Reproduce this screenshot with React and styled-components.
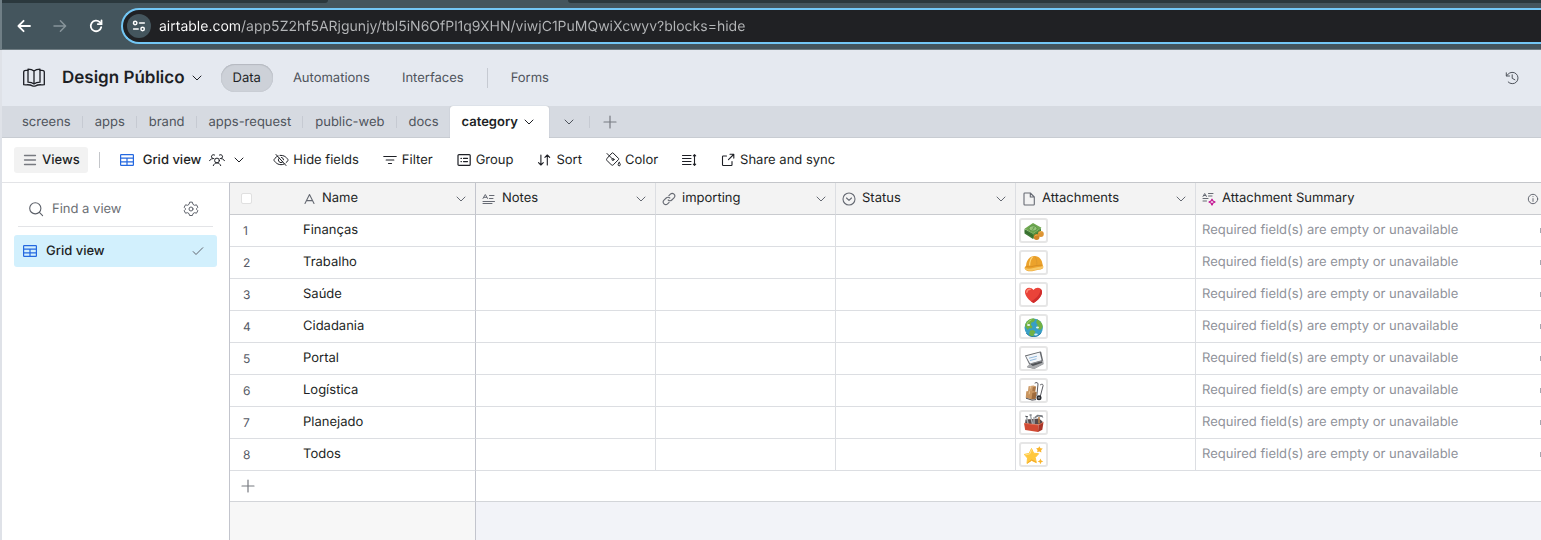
import React from "react";
import styled, { createGlobalStyle, css } from "styled-components";

const GlobalStyle = createGlobalStyle`
  * { box-sizing: border-box; }
  body {
    margin: 0;
    font-family: Inter, "Liberation Sans", sans-serif;
    font-size: 13px;
    line-height: 19px;
    color: #1d1f25;
    background: #fff;
    -webkit-font-smoothing: antialiased;
    text-rendering: geometricPrecision;
  }
  button, input { font: inherit; color: inherit; text-rendering: inherit; }
`;

/* ---------- icons ---------- */

const Svg = styled.svg`
  display: block;
  flex: none;
  fill: none;
  stroke: currentColor;
  stroke-width: ${(p) => p.$weight || 1};
  stroke-linecap: round;
  stroke-linejoin: round;
`;

const Icon = ({ size = 16, weight, children, ...rest }) => (
  <Svg width={size} height={size} viewBox={`0 0 ${size} ${size}`} $weight={weight} aria-hidden="true" {...rest}>
    {children}
  </Svg>
);

const BackIcon = () => (
  <Icon weight={1.8}><path d="M14 8H2.6M7.6 2.8 2.4 8l5.200 5.200" /></Icon>
);
const ForwardIcon = () => (
  <Icon weight={1.5}><path d="M2 8h11.400M8.400 2.800 13.600 8l-5.200 5.200" /></Icon>
);
const ReloadIcon = () => (
  <Icon weight={1.8}>
    <path d="M13.2 9.200A5.300 5.300 0 1 1 11.800 4.200L13.200 5.600" />
    <path d="M13.500 2.400v3.700H9.800" strokeLinejoin="miter" />
  </Icon>
);
const TuneIcon = () => (
  <Icon size={14} weight={1.5}>
    <circle cx="3.200" cy="4" r="1.700" /><path d="M7.500 4h4.800M1.600 10h4.600" /><circle cx="10.600" cy="10" r="1.700" />
  </Icon>
);
const BookIcon = () => (
  <Icon size={24} weight={1.300}>
    <path d="M12 5c-1.600-1.400-3.500-1.800-6-1.800v13c2.600 0 4.500.5 6 1.700 1.500-1.200 3.400-1.700 6-1.700v-13c-2.500 0-4.400.4-6 1.800Zm0 0v12.500" />
    <path d="M6 4.300H4c-1.300 0-2.300.5-2.300 1.800v12.600c2 .3 4.600-.2 6.600.3 1.300.3 2.300 1.200 3.700 1.200s2.400-.9 3.700-1.200c2-.5 4.600 0 6.600-.3V6.100c0-1.300-1-1.800-2.300-1.800h-2" />
  </Icon>
);
const ChevronIcon = () => (
  <Icon size={12} weight={1}><path d="m2 4 4 4 4-4" /></Icon>
);
const HistoryIcon = () => (
  <Icon>
    <path d="M4.200 12A5.700 5.700 0 1 0 4 4.300L2.300 6M2.300 2.800V6h3.200" /><path d="M8.200 4.800v3.500l2.700 1.500" />
  </Icon>
);
const PlusIcon = () => (
  <Icon weight={1.200}><path d="M8 2v12M2 8h12" /></Icon>
);
const MenuIcon = () => (
  <Icon weight={1.300}><path d="M2.500 3.500h11M2.500 8h11M2.500 12.500h11" /></Icon>
);
const GridIcon = () => (
  <Icon weight={1.200}>
    <rect x="1.600" y="2.600" width="12.800" height="10.800" rx=".6" /><path d="M1.600 6.200h12.800M1.600 9.800h12.800M8 6.200v7.200" />
  </Icon>
);
const PeopleIcon = () => (
  <Icon>
    <circle cx="8" cy="8.500" r="2.400" />
    <path d="M4.300 13.600c.6-1.700 2-2.700 3.700-2.700s3.100 1 3.700 2.700" />
    <path d="M4.800 6.600A2 2 0 1 1 5.600 3M3.500 6.700C2.200 6.700 1.200 7.400.6 8.700M11.200 6.600A2 2 0 1 0 10.400 3M12.500 6.700c1.300 0 2.300.7 2.900 2" />
  </Icon>
);
const HideIcon = () => (
  <Icon>
    <path d="M5 3.900C2.300 5 .8 8 .8 8s2.300 4.700 7.200 4.700c1.200 0 2.200-.2 3.100-.7M7 3.400h1c4.900 0 7.200 4.600 7.200 4.600s-.7 1.500-2.200 2.800M3 2.500l10 11" />
    <path d="M6.200 6.100a2.600 2.600 0 0 0 3.600 3.800M8.500 5.400A2.600 2.600 0 0 1 10.600 7.800" />
  </Icon>
);
const FilterIcon = () => (
  <Icon weight={1.200}><path d="M1.800 4.500h12.400M4.200 8h7.600M6.500 11.500h3" /></Icon>
);
const GroupIcon = () => (
  <Icon weight={1.200}>
    <rect x="2" y="2.600" width="12.200" height="10.800" rx="1" /><path d="M5 6.400h.4M7.500 6.400h4M5 9.600h.4M7.500 9.600h4" />
  </Icon>
);
const SortIcon = () => (
  <Icon weight={1.100}><path d="M4.900 3v10M2.500 10.600 4.900 13l2.400-2.400M11.300 13V3M8.900 5.400 11.300 3l2.400 2.400" /></Icon>
);
const ColorIcon = () => (
  <Icon>
    <path d="M2 1.500 7.300 6.800M4.300 3.800 7.100 1c.3-.3.7-.3 1 0l5.500 5.500c.3.300.3.700 0 1l-5.400 5.400c-.5.500-1.300.5-1.800 0L1.900 8.400c-.5-.5-.5-1.300 0-1.800Z" />
    <circle cx="8" cy="7.500" r="1" />
    <path d="M14.200 10.400s1.100 1.400 1.100 2.300a1.100 1.100 0 0 1-2.200 0c0-.9 1.100-2.300 1.100-2.300Z" />
  </Icon>
);
const RowHeightIcon = () => (
  <Icon weight={1.100}>
    <path d="M1.500 3.500H10M1.500 6.500H10M1.500 9.500H10M1.500 12.500H10M13.500 3v10M12.300 3.800 13.500 2.700l1.200 1.100M12.300 12.200l1.200 1.100 1.200-1.100" />
  </Icon>
);
const ShareIcon = () => (
  <Icon weight={1.100}><path d="M6.500 4H3.200c-.4 0-.7.3-.7.700v8.100c0 .4.300.7.700.7h8.100c.4 0 .7-.3.700-.7V9.500M10 2.300h3.800v3.800M13.600 2.500 8.500 7.600" /></Icon>
);
const SearchIcon = () => (
  <Icon weight={1.100}><circle cx="7.300" cy="7.300" r="5.600" /><path d="m11.400 11.400 3.200 3.200" /></Icon>
);
const GearIcon = () => (
  <Icon>
    <circle cx="8" cy="8" r="2" />
    <path d="m6.600 1.500-.6 1.900-1.500.9-2-.5L1.200 6.300 2.500 7.700v.6L1.200 9.700l1.300 2.500 2-.5 1.500.9.600 1.900h2.800l.6-1.900 1.500-.9 2 .5 1.300-2.500-1.300-1.400v-.6l1.300-1.400-1.300-2.500-2 .5-1.500-.9-.6-1.900Z" />
  </Icon>
);
const CheckIcon = () => (
  <Icon size={14} weight={1}><path d="m2.200 7.600 2.800 2.900 6.800-6.800" /></Icon>
);
const TextIcon = () => (
  <Icon size={14} weight={1.100}><path d="m3 11.500 4.500-9 4.500 9M4.400 8.600h6.200" /></Icon>
);
const LongTextIcon = () => (
  <Icon size={14} weight={1}><path d="M1 6.500 3.300 2.500l2.300 4M1.900 5.300h2.800M7.500 3.500H12M7.500 6.500H11M1 9.500h11.500M1 11.500h9" /></Icon>
);
const LinkIcon = () => (
  <Icon size={14} weight={1.100}>
    <path d="m6.900 3.700 1.500-1.500a2.500 2.500 0 0 1 3.600 3.600L9.800 8a2.500 2.500 0 0 1-3.600 0M7.100 10.300l-1.500 1.500A2.500 2.500 0 0 1 2 8.200L4.200 6a2.500 2.500 0 0 1 3.600 0" />
  </Icon>
);
const StatusIcon = () => (
  <Icon size={14} weight={1.100}><circle cx="7" cy="7" r="6" /><path d="m4.500 6 2.500 2.400L9.500 6" /></Icon>
);
const FileIcon = () => (
  <Icon size={14} weight={1.100}><path d="M8.300 1H2.700c-.4 0-.7.300-.7.700v10.600c0 .4.300.7.700.7h8.900c.4 0 .7-.3.700-.7V5Zm0 0v4h4" /></Icon>
);
const SummaryIcon = () => (
  <Icon size={14} weight={1}>
    <path d="M1 4.500 2.700 1.500l1.700 3M1.600 3.500h2.200M6.500 1.500H11M6.500 4h3.500M1 6.500h5M1 9h3.500" />
    <path stroke="#c20a8f" strokeWidth="1.200" d="M10 7.200 11 9l2 1-2 1-1 2-1-2-2-1 2-1Z" />
  </Icon>
);
const InfoIcon = () => (
  <Icon size={12} weight={1}><circle cx="6" cy="6" r="4.700" /><path d="M6 5.600v2.800M6 3.600v.1" /></Icon>
);

/* ---------- attachment pictures ---------- */

const Picture = ({ label, children }) => (
  <svg width="20" height="20" viewBox="0 0 20 20" role="img" aria-label={label}>{children}</svg>
);

const Money = () => (
  <Picture label="Money">
    <path d="M.5 8v4.500L9 18v-5.500Z" fill="#3f7a35" /><path d="m9 12.500 8-5.500v4L9 18Z" fill="#56903f" />
    <path d="M.5 7.800 9 2l8.500 4.800L9 12.800Z" fill="#6fa850" />
    <path d="M.7 10.200 9 15.400l8-5.700" fill="none" stroke="#2c5d28" strokeWidth=".6" />
    <ellipse cx="9" cy="7.400" rx="4" ry="2.600" fill="#98c67a" stroke="#4d8a3e" strokeWidth=".7" />
    <path d="M7.800 8c1 .7 2.400.2 1.600-.7-.7-.7.400-1.300 1.200-.7" fill="none" stroke="#4d8a3e" strokeWidth=".7" />
    <circle cx="12.600" cy="16" r="2.900" fill="#d08328" /><circle cx="16.800" cy="13" r="3" fill="#dd9433" />
    <path d="M10.600 15.400c.6-1.100 1.700-1.500 2.900-1.200M14.800 12c.6-1.100 1.700-1.500 2.900-1.200" fill="none" stroke="#f2b855" />
  </Picture>
);
const Helmet = () => (
  <Picture label="Helmet">
    <path d="M.6 15.500c0-1.500.9-2 1.500-3C2.300 8 5.500 3 10.500 3c4.900 0 7.800 4 8.200 9.300.7 1 .9 2.400 0 3.200-2.500 1.600-5.700 1.200-8.700 2.200-3 1-8 1-9.400-2.200Z" fill="#eca22b" />
    <path d="M.8 15c3 1 6 .8 8.500 0 3.200-1 6.300-.9 9.700-2 .3 1.100.2 1.900-.5 2.300-2.500 1.500-5.500 1-8.500 2-3 1-8 .9-9.200-2.300Z" fill="#f8c765" />
    <path d="M2.200 13.300c3 .9 5 .5 7.500-.2 3-.9 5.900-.7 8.800-1" fill="none" stroke="#c57d1e" strokeWidth=".5" />
    <path d="M8.600 3.800c-2.300 2.300-3 5-3 8.700" fill="none" stroke="#ffd981" strokeWidth="1.200" />
    <path d="M11 3.500c1.500 2.300 2 5 1.800 8.300" fill="none" stroke="#d8952e" strokeWidth=".7" />
  </Picture>
);
const Heart = () => (
  <Picture label="Heart">
    <path d="M9.500 18C5 15.200 1 11.200 1 7c0-4.600 5.600-6 8.500-2C12.300 1 18 2.400 18 7c0 4.200-4 8.200-8.500 11Z" fill="#ea4339" />
    <path d="M9.500 18C14 15.200 18 11.200 18 7c0-1.600-.7-2.700-1.600-3.500C16.800 8.500 13 13.500 7 16.300Z" fill="#d02d2c" />
    <path d="M2.800 7.300C3 5 4.300 4.200 6.200 4.200" fill="none" stroke="#ff8a78" strokeWidth="1.400" strokeLinecap="round" />
  </Picture>
);
const Globe = () => (
  <Picture label="Globe">
    <circle cx="9.700" cy="10.700" r="9.200" fill="#389fc6" />
    <path d="M1 9C1.600 5 4.500 2 8.500 1.500c1.500-.1 2.500.5 2.700 1.300L9.500 5l-2 .5-.6 2.200 1.600 2-.8 1.800-2.200-.6L3.700 13ZM6 13.500l3.200-.6 2.300 1.900-1.500 2.400-.8 2.700c-1.700-.1-3-.7-4.200-1.600ZM13 2.200c3.200 1.200 5.400 4 5.800 7.300l-1.600 3-2.200.2-2.300-2.200 1-2.500-1.500-2.300Z" fill="#72b144" />
    <path d="M3 7c1-2 2.300-3.300 4.500-4.200" fill="none" stroke="#a9dc71" />
    <ellipse cx="4.600" cy="8" rx="1.600" ry="1" fill="#e8f5ef" /><ellipse cx="13.500" cy="10.500" rx="1.500" ry=".9" fill="#e4f3f6" /><ellipse cx="12" cy="17.500" rx="1.800" ry=".9" fill="#d6eef2" />
    <path d="M2.200 16c3.500 4.800 11.500 5.300 15-.5" fill="none" stroke="#2277a5" strokeWidth=".9" />
  </Picture>
);
const Laptop = () => (
  <Picture label="Laptop">
    <path d="m.9 6.500 15.300-4c.5-.1.900.1 1 .6l2 8.800L5.500 16Z" fill="#66696e" />
    <path d="m2 7.200 13.700-3.600 1.900 7.600L6 14.500Z" fill="#f3f6f9" /><path d="m5 9.200 8-2M6 11.500l6.500-1.700" stroke="#92b9dd" strokeWidth="1" />
    <path d="m5.500 15 13.700-3.500.5 3-9.500 5L3 17.500Z" fill="#a9abae" />
    <path d="m6.400 15.200 11.500-3 .4 1.500-9.500 3.300Z" fill="#505357" /><path d="m3 17.500 7.200 2 9.500-5v.6l-9.400 4.900L3 18.300Z" fill="#6b6e73" />
  </Picture>
);
const HandTruck = () => (
  <Picture label="Hand truck">
    <path d="M11 2c1.500-1 3-.4 3 1L12.800 15M16.500 3.700c1.400-1 2.800-.4 2.600.9L16 16.500" fill="none" stroke="#5a5b61" strokeWidth="1" strokeLinecap="round" />
    <path d="m4.500 5.200 5-.8 2.400 1.200-.8 5.200-7.200-.5Z" fill="#cf9f6e" /><path d="m8.800 6.300 3.100-.7-.8 5.500-3.100.2Z" fill="#a97646" />
    <path d="m2.300 10.300 6.200-.5 4 1.300-.8 6.700-4.500.4-5.500-1.400Z" fill="#c9945e" /><path d="m8.400 11.900 4.100-.8-.8 6.700-4.300.7Z" fill="#9d6a3c" />
    <path d="m5.500 10.300-.4 3M6.800 5l-.3 2.500" stroke="#eed0a1" strokeWidth=".8" />
    <circle cx="15" cy="16.800" r="2.500" fill="#2c2d31" /><circle cx="15" cy="16.800" r=".9" fill="#9a9ba0" /><path d="m2 17.200 6 1.900 4-.5" stroke="#4f4e52" fill="none" />
  </Picture>
);
const Toolbox = () => (
  <Picture label="Toolbox">
    <path d="M1.500 6.500 15 5.500l3.500 3v3H1Z" fill="#57494a" /><path d="m2.500 4 1.600 7M6.500 2.500l2 8.500M10 4v7" stroke="#a7acb0" strokeWidth="1.400" />
    <path d="m10.500 4 2.800-2.200 5.200.4.800 2.800-1.600-1-3.500-.5-3 1.800Z" fill="#787c81" /><path d="M15 4v6.500" stroke="#c18147" strokeWidth="1.500" /><path d="M1.300 3.200 4 3.800M5.500 2h2.200" stroke="#474b50" />
    <path d="M0 10.300 14.500 12 14 19 1.200 17Z" fill="#d14a33" /><path d="m14.500 12 5-2.700-1.200 7.500L14 19Z" fill="#a93427" />
    <path d="M0 10.300 14.500 12l5-2.700" fill="none" stroke="#e87355" strokeWidth=".8" />
  </Picture>
);
const Sparkle = () => (
  <Picture label="Star">
    <path d="m7.500 3.500 2.200 4.700 5 .5-3.500 3.800 1.200 5.200-4.800-2.300L3 18.500l.5-5.400L.3 9.400l4.900-1Z" fill="#ffc83d" stroke="#ffc83d" strokeWidth="1" strokeLinejoin="round" />
    <path d="m7.600 4.500-1.700 4.300-4.500 1.100" fill="none" stroke="#ffe38d" strokeWidth="1" /><path d="M3.500 17.800 7.700 15l4.300 2" fill="none" stroke="#ee9d24" strokeWidth=".8" />
    <path d="m15.300 1.200 1.200 2 2.300.3-1.700 1.700.3 2.300-2.200-1-2 .8.300-2.300-1.400-1.700 2.200-.2ZM16.500 13.500l.8 2 2 .9-2 .8-.8 2-.9-2-2-.8 2-.9Z" fill="#f9b52d" />
  </Picture>
);

/* ---------- browser chrome ---------- */

const BrowserBar = styled.header`
  display: flex;
  flex-direction: column;
  height: 50px;
  background: #44555d;
  border-left: 2px solid #707f86;
  border-bottom: 1px solid #707d83;
  overflow: hidden;
`;
const TabStrip = styled.div`
  display: grid;
  grid-template-columns: 326px 240px 1fr;
  height: 3px;
  flex: none;
`;
const TabEdge = styled.span`
  background: ${(p) => (p.$active ? "transparent" : "#2b383d")};
  border-radius: ${(p) => (p.$left ? "0 0 0 3px" : "0 0 3px 0")};
`;
const NavRow = styled.div`
  display: flex;
  align-items: center;
  flex: 1;
  padding: 0 0 0 14px;
`;
const NavButton = styled.button`
  display: grid;
  place-items: center;
  width: 16px;
  height: 24px;
  margin-right: 20px;
  padding: 0;
  border: 0;
  background: none;
  color: ${(p) => (p.disabled ? "#87949a" : "#fff")};
`;
const AddressBar = styled.label`
  display: flex;
  align-items: center;
  gap: 8px;
  flex: 1;
  height: 36px;
  margin-left: -3px;
  padding-left: 4px;
  border: 2px solid #73c7f5;
  border-right: 0;
  border-radius: 18px 0 0 18px;
  background: #202124;
`;
const SiteInfo = styled.span`
  display: grid;
  place-items: center;
  width: 24px;
  height: 24px;
  border-radius: 50%;
  background: #44555d;
  color: #fff;
`;
const AddressInput = styled.input`
  flex: 1;
  min-width: 0;
  height: 24px;
  padding: 0;
  border: 0;
  outline: 0;
  font-size: 14px;
  color: #b4b6b8;
  background: linear-gradient(to right, #fff 81px, #b4b6b8 81px);
  background-clip: text;
  -webkit-text-fill-color: transparent;
`;

/* ---------- base header ---------- */

const Page = styled.div`
  display: flex;
  flex-direction: column;
  min-height: 100vh;
  overflow: hidden;
`;
const Base = styled.div`
  display: flex;
  flex-direction: column;
  flex: 1;
  border-left: 2px solid #dfe2e8;
`;
const BaseHeader = styled.header`
  display: flex;
  align-items: center;
  height: 56px;
  padding: 0 21px 0 20px;
  background: #e5e9f0;
`;
const BaseTitle = styled.button`
  display: flex;
  align-items: center;
  gap: 6px;
  margin-left: 16px;
  padding: 0;
  border: 0;
  background: none;
`;
const BaseName = styled.h1`
  margin: 0;
  font-size: 17px;
  line-height: 25px;
  font-weight: 600;
`;
const MainNav = styled.nav`
  display: flex;
  align-items: center;
  gap: 8px;
  flex: 1;
  margin-left: 18px;
`;
const NavLink = styled.a`
  display: flex;
  align-items: center;
  height: 28px;
  padding: 0 12px;
  border-radius: 14px;
  text-decoration: none;
  color: ${(p) => (p.$active ? "#1d1f25" : "#4f545c")};
  ${(p) => p.$active && css`
    background: #cdd1d8;
    box-shadow: inset 0 1px 1px #b5b9c0, inset 0 0 1px #a9adb4;
  `}
`;
const Divider = styled.span`
  width: 1px;
  height: ${(p) => p.$height}px;
  background: ${(p) => p.$color || "#c6cad2"};
  margin: 0 ${(p) => p.$space || 0}px;
`;
const IconButton = styled.button`
  display: grid;
  place-items: center;
  width: ${(p) => p.$width || 16}px;
  height: ${(p) => p.$height || 24}px;
  padding: 0;
  border: 0;
  background: none;
  color: ${(p) => p.$color || "#4f545c"};
`;

/* ---------- table tabs ---------- */

const TableTabs = styled.nav`
  display: flex;
  align-items: center;
  height: 32px;
  padding-left: 8px;
  background: #d6dae1;
  box-shadow: inset 0 -1px #c8ccd2;
`;
const TableTab = styled.a`
  display: flex;
  align-items: center;
  gap: 5px;
  height: 32px;
  padding: 0 11px 0 12px;
  text-decoration: none;
  color: #4f545c;
  ${(p) => p.$active && css`
    background: #fff;
    color: #1d1f25;
    font-weight: 600;
    padding-right: 14px;
    border-radius: 3px 3px 0 0;
    box-shadow: 0 0 1px #9da1a8;
    clip-path: inset(-2px -2px 0 -2px);
  `}
`;

/* ---------- view toolbar ---------- */

const Toolbar = styled.div`
  display: flex;
  align-items: center;
  height: 44px;
  padding-left: 12px;
`;
const ToolButton = styled.button`
  display: flex;
  align-items: center;
  gap: 4px;
  height: 26px;
  padding: 0 8px;
  border: 0;
  border-radius: 3px;
  background: ${(p) => (p.$pressed ? "#f2f2f2" : "none")};
  font-weight: ${(p) => (p.$strong ? 500 : 400)};
  white-space: nowrap;
`;
const ViewButton = styled(ToolButton)`
  gap: 8px;
  font-weight: 500;
`;
const ToolGroup = styled.div`
  display: flex;
  gap: 7px;
  margin-left: 12px;
`;
const Tint = styled.span`
  display: flex;
  color: ${(p) => p.$color};
`;

/* ---------- sidebar ---------- */

const Workspace = styled.div`
  display: flex;
  flex: 1;
`;
const Sidebar = styled.aside`
  flex: none;
  width: 228px;
  padding: 9px 12px;
  border-top: 1px solid #e3e4e7;
  border-right: 1px solid #c3c5cd;
`;
const SearchRow = styled.label`
  display: flex;
  align-items: center;
  gap: 8px;
  height: 35px;
  margin: 0 4px 8px;
  padding: 0 14px 0 10px;
  border-bottom: 1px solid #e3e4e7;
  color: #5c6069;
`;
const SearchInput = styled.input`
  flex: 1;
  min-width: 0;
  padding: 0;
  border: 0;
  outline: 0;
  background: none;
  &::placeholder { color: #6c6f75; opacity: 1; }
`;
const ViewItem = styled.a`
  display: flex;
  align-items: center;
  gap: 8px;
  height: 32px;
  padding: 0 12px 0 8px;
  border-radius: 3px;
  background: #d2f0fd;
  color: inherit;
  font-weight: 500;
  text-decoration: none;
`;
const Grow = styled.span`
  flex: 1;
`;

/* ---------- grid ---------- */

const GridArea = styled.main`
  display: flex;
  flex-direction: column;
  flex: 1;
  min-width: 0;
  border-top: 1px solid #c4c6ca;
`;
const Table = styled.table`
  width: 100%;
  table-layout: fixed;
  border-collapse: separate;
  border-spacing: 0;
`;
const HeadCell = styled.th`
  height: 32px;
  padding: 0 8px 0 6px;
  background: #f3f3f3;
  border-bottom: 1px solid #c9cbcf;
  border-right: ${(p) => (p.$edge ? `1px solid ${p.$edge}` : "0")};
  font-weight: 400;
  text-align: left;
  &:last-child { padding-right: 2px; }
`;
const HeadContent = styled.div`
  display: flex;
  align-items: center;
  gap: 6px;
`;
const Checkbox = styled.input`
  appearance: none;
  display: block;
  width: 11px;
  height: 11px;
  margin: 0 0 0 5px;
  border: 1px solid #e0e0e0;
  border-radius: 2px;
  background: #fff;
`;
const Cell = styled.td`
  height: 32px;
  padding: 0 0 0 ${(p) => p.$pad || 6}px;
  border-bottom: 1px solid #dcdee2;
  border-right: ${(p) => (p.$edge ? `1px solid ${p.$edge}` : "0")};
  color: ${(p) => p.$color || "#1d1f25"};
  white-space: nowrap;
  overflow: hidden;
`;
const RowNumber = styled(Cell)`
  padding-left: 13px;
  font-size: 12px;
  color: #565a66;
`;
const Thumb = styled.div`
  display: grid;
  place-items: end center;
  width: 29px;
  height: 25px;
  border: 2px solid #e6e6e6;
  border-radius: 3px;
`;
const AddCell = styled.td`
  height: 31px;
  padding: 0 0 0 10px;
  border-bottom: 1px solid #d3d5d9;
  border-right: ${(p) => (p.$edge ? `1px solid ${p.$edge}` : "0")};
`;
const Filler = styled.div`
  display: grid;
  grid-template-columns: 246px 1fr;
  flex: 1;
`;
const FillerPane = styled.div`
  background: ${(p) => (p.$frozen ? "#f7f7f7" : "#f2f3f8")};
  border-right: ${(p) => (p.$frozen ? "1px solid #c3c5cd" : "0")};
`;
const Summary = styled.div`
  display: flex;
  justify-content: space-between;
  align-items: center;
`;
const MoreMark = styled.span`
  width: 1px;
  height: 5px;
  background: #a5a8b0;
`;

const FROZEN = "#c3c5cd";
const LINE = "#dcdee2";

const tableNames = ["screens", "apps", "brand", "apps-request", "public-web", "docs"];

const tools = [
  ["Hide fields", HideIcon],
  ["Filter", FilterIcon],
  ["Group", GroupIcon],
  ["Sort", SortIcon],
  ["Color", ColorIcon],
  ["", RowHeightIcon],
  ["Share and sync", ShareIcon],
];

const fields = [
  ["Name", TextIcon, FROZEN],
  ["Notes", LongTextIcon, LINE],
  ["importing", LinkIcon, LINE],
  ["Status", StatusIcon, LINE],
  ["Attachments", FileIcon, LINE],
];

const records = [
  ["Finanças", Money],
  ["Trabalho", Helmet],
  ["Saúde", Heart],
  ["Cidadania", Globe],
  ["Portal", Laptop],
  ["Logística", HandTruck],
  ["Planejado", Toolbox],
  ["Todos", Sparkle],
];

function Browser() {
  return (
    <BrowserBar>
      <TabStrip><TabEdge /><TabEdge $active /><TabEdge $left /></TabStrip>
      <NavRow>
        <NavButton aria-label="Back"><BackIcon /></NavButton>
        <NavButton aria-label="Forward" disabled><ForwardIcon /></NavButton>
        <NavButton aria-label="Reload"><ReloadIcon /></NavButton>
        <AddressBar>
          <SiteInfo><TuneIcon /></SiteInfo>
          <AddressInput
            aria-label="Address"
            defaultValue="airtable.com/app5Z2hf5ARjgunjy/tbl5iN6OfPl1q9XHN/viwjC1PuMQwiXcwyv?blocks=hide"
          />
        </AddressBar>
      </NavRow>
    </BrowserBar>
  );
}

function Grid() {
  return (
    <GridArea>
      <Table>
        <colgroup>
          <col style={{ width: 66 }} />
          {fields.map(([name]) => <col key={name} style={{ width: 180 }} />)}
          <col />
        </colgroup>
        <thead>
          <tr>
            <HeadCell><Checkbox type="checkbox" aria-label="Select all" /></HeadCell>
            {fields.map(([name, FieldIcon, edge]) => (
              <HeadCell key={name} $edge={edge}>
                <HeadContent>
                  <Tint $color="#666a73"><FieldIcon /></Tint>
                  <Grow>{name}</Grow>
                  <IconButton $width={12} $height={18} $color="#666a73" aria-label={`${name} options`}><ChevronIcon /></IconButton>
                </HeadContent>
              </HeadCell>
            ))}
            <HeadCell>
              <HeadContent>
                <Tint $color="#666a73"><SummaryIcon /></Tint>
                <Grow>Attachment Summary</Grow>
                <Tint $color="#666a73"><InfoIcon /></Tint>
              </HeadContent>
            </HeadCell>
          </tr>
        </thead>
        <tbody>
          {records.map(([name, Art], i) => (
            <tr key={name}>
              <RowNumber>{i + 1}</RowNumber>
              <Cell $pad={7} $edge={FROZEN}>{name}</Cell>
              <Cell $edge={LINE} />
              <Cell $edge={LINE} />
              <Cell $edge={LINE} />
              <Cell $pad={3} $edge={LINE}><Thumb><Art /></Thumb></Cell>
              <Cell $color="#8f929a">
                <Summary>Required field(s) are empty or unavailable<MoreMark /></Summary>
              </Cell>
            </tr>
          ))}
          <tr>
            <AddCell colSpan={2} $edge={FROZEN}>
              <IconButton $color="#777a80" aria-label="Add record"><PlusIcon /></IconButton>
            </AddCell>
            <AddCell colSpan={5} />
          </tr>
        </tbody>
      </Table>
      <Filler><FillerPane $frozen /><FillerPane /></Filler>
    </GridArea>
  );
}

export default function App() {
  return (
    <Page>
      <GlobalStyle />
      <Browser />
      <Base>
        <BaseHeader>
          <BookIcon />
          <BaseTitle><BaseName>Design Público</BaseName><ChevronIcon /></BaseTitle>
          <MainNav>
            <NavLink href="#data" $active>Data</NavLink>
            <NavLink href="#automations">Automations</NavLink>
            <NavLink href="#interfaces">Interfaces</NavLink>
            <Divider $height={20} $space={3} />
            <NavLink href="#forms">Forms</NavLink>
          </MainNav>
          <IconButton aria-label="History"><HistoryIcon /></IconButton>
        </BaseHeader>

        <TableTabs>
          {tableNames.map((name, i) => (
            <React.Fragment key={name}>
              {i > 0 && <Divider $height={12} />}
              <TableTab href={`#${name}`}>{name}</TableTab>
            </React.Fragment>
          ))}
          <TableTab href="#category" $active>category <ChevronIcon /></TableTab>
          <IconButton $width={40} aria-label="All tables"><ChevronIcon /></IconButton>
          <Divider $height={12} />
          <IconButton $width={40} $color="#777b82" aria-label="Add table"><PlusIcon /></IconButton>
        </TableTabs>

        <Toolbar>
          <ToolButton $pressed $strong><Tint $color="#777a80"><MenuIcon /></Tint>Views</ToolButton>
          <Divider $height={16} $space={11} $color="#c4c6ca" />
          <ViewButton>
            <Tint $color="#2468e0"><GridIcon /></Tint>Grid view<PeopleIcon /><ChevronIcon />
          </ViewButton>
          <ToolGroup>
            {tools.map(([label, ToolIcon]) => (
              <ToolButton key={label} aria-label={label || "Row height"}><ToolIcon />{label}</ToolButton>
            ))}
          </ToolGroup>
        </Toolbar>

        <Workspace>
          <Sidebar>
            <SearchRow>
              <SearchIcon />
              <SearchInput placeholder="Find a view" aria-label="Find a view" />
              <GearIcon />
            </SearchRow>
            <ViewItem href="#grid-view">
              <Tint $color="#2468e0"><GridIcon /></Tint>
              <Grow>Grid view</Grow>
              <Tint $color="#61656e"><CheckIcon /></Tint>
            </ViewItem>
          </Sidebar>
          <Grid />
        </Workspace>
      </Base>
    </Page>
  );
}
